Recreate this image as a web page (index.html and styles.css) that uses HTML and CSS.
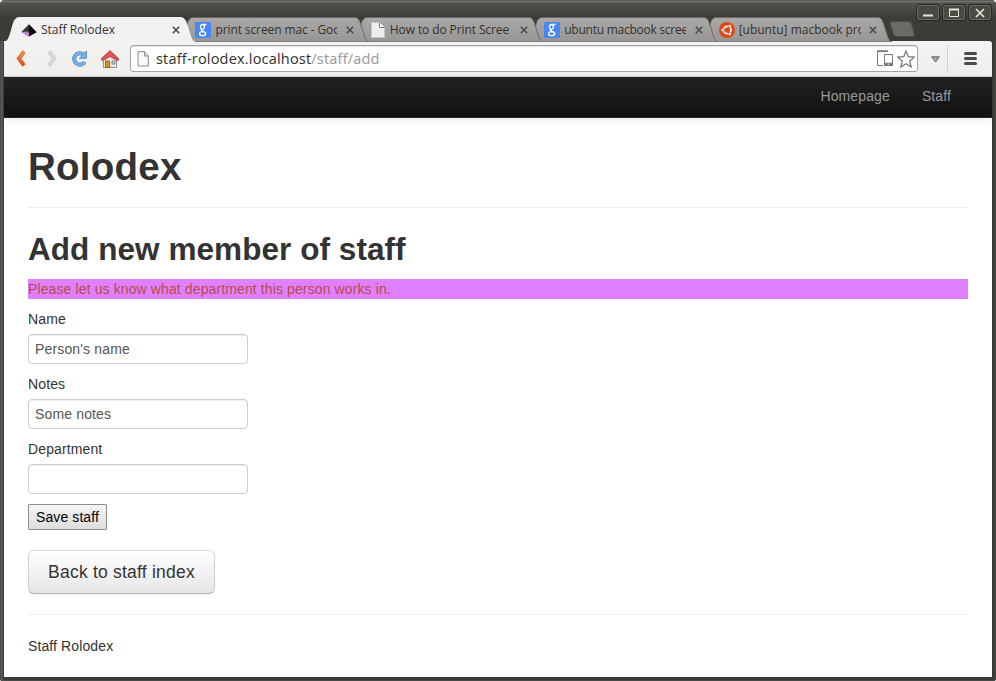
FILE: index.html
```html
<!DOCTYPE html>
<html lang="en">
<head>
<meta charset="utf-8">
<title>Staff Rolodex</title>
<link rel="stylesheet" href="styles.css">
</head>
<body>
<svg class="defs" width="0" height="0">
  <defs>
    <linearGradient id="tabfill" x1="0" y1="0" x2="0" y2="1"><stop offset="0" stop-color="#aaa9a7"/><stop offset="1" stop-color="#979694"/></linearGradient>
    <linearGradient id="orange" x1="0" y1="0" x2="0" y2="1"><stop offset="0" stop-color="#f59a55"/><stop offset="1" stop-color="#d94b0c"/></linearGradient>
    <linearGradient id="prism" x1="0" y1="0" x2="1" y2="0"><stop offset="0" stop-color="#4ed0d8"/><stop offset=".5" stop-color="#c983ee"/><stop offset="1" stop-color="#f36ad4"/></linearGradient>
    <symbol id="tab" viewBox="0 0 190 25"><path d="M0 25C3 24 4 21 5.500 16.500L8.500 6C10 1.800 11.500.5 14.500.5H175C178.500.5 180 2 181.500 6.500L185.500 19C187 23 188 24.500 190 25Z"/></symbol>
    <symbol id="close" viewBox="0 0 8 8"><path d="M.8.8L7.200 7.200M7.200.8L.8 7.200" fill="none" stroke="#4c4b48" stroke-width="1.600"/></symbol>
    <symbol id="google" viewBox="0 0 16 16"><rect width="16" height="16" rx="1" fill="#4787f3"/><g fill="none" stroke="#fff" stroke-width="1.300"><ellipse cx="7.400" cy="4.900" rx="2" ry="2.400"/><ellipse cx="7.600" cy="11.700" rx="3" ry="2"/><path d="M7.500 2.500h4M7.500 7.400c-2 .8-.8 1.400.8 2.100 1.500.6 2.200 1.200 2.300 2"/></g></symbol>
    <symbol id="page" viewBox="0 0 14 16"><path d="M.5.5h8l5 5v10h-13z" fill="#eee" stroke="#c8c8c6"/><path d="M8.500.5v5h5" fill="#fff" stroke="#777"/></symbol>
    <symbol id="ubuntu" viewBox="0 0 16 16"><circle cx="8" cy="8" r="8" fill="#dd4814"/><circle cx="8.300" cy="8" r="3.700" fill="none" stroke="#fff" stroke-width="1.700"/><path d="M5.800 8H3M9.500 5.900l1.500-2.500M9.500 10.100l1.500 2.500" stroke="#dd4814" stroke-width="1"/><g fill="#fff" stroke="#dd4814" stroke-width=".6"><circle cx="3.500" cy="8" r="1.600"/><circle cx="10.700" cy="4" r="1.600"/><circle cx="10.700" cy="12" r="1.600"/></g></symbol>
  </defs>
</svg>
<div class="window">
  <header class="titlebar">
    <nav class="tabs">
      <div class="tab active">
        <svg class="shape"><use href="#tab"/></svg>
        <svg class="fav" viewBox="0 0 16 16"><path d="M8 2.200L.3 10 8 14.500z" fill="#343434"/><path d="M8 2.200l7.700 8L8 14.500z" fill="#090909"/><path d="M.3 10L6.500 9.500 8 11v3.500z" fill="url(#prism)"/></svg>
        <span class="name n0">Staff Rolodex</span><svg class="x"><use href="#close"/></svg>
      </div>
      <div class="tab"><svg class="shape"><use href="#tab"/></svg><svg class="fav"><use href="#google"/></svg><span class="name n1">print screen mac - Goo</span><svg class="x"><use href="#close"/></svg></div>
      <div class="tab"><svg class="shape"><use href="#tab"/></svg><svg class="fav"><use href="#page"/></svg><span class="name n2">How to do Print Scree</span><svg class="x"><use href="#close"/></svg></div>
      <div class="tab"><svg class="shape"><use href="#tab"/></svg><svg class="fav"><use href="#google"/></svg><span class="name n3">ubuntu macbook scree</span><svg class="x"><use href="#close"/></svg></div>
      <div class="tab"><svg class="shape"><use href="#tab"/></svg><svg class="fav"><use href="#ubuntu"/></svg><span class="name n4">[ubuntu] macbook pro</span><svg class="x"><use href="#close"/></svg></div>
      <svg class="newtab" viewBox="0 0 26 16"><path d="M3 .5h16c2 0 3 .8 3.700 3l2.500 9c.6 2.200 0 3-1.700 3H8c-2 0-3-.8-3.700-3L1.300 3C.8 1.200 1.200.5 3 .5z" fill="#6b6a65" stroke="#4c4b46"/></svg>
    </nav>
    <div class="controls">
      <span class="ctl"><svg width="12" height="10"><path d="M1 7.500h10" stroke="#e8e5db" stroke-width="2"/></svg></span>
      <span class="ctl"><svg width="12" height="10"><path d="M1.500 1.500h9v7h-9z" fill="none" stroke="#e8e5db"/><path d="M1 1.500h10" stroke="#e8e5db" stroke-width="2"/></svg></span>
      <span class="ctl"><svg width="12" height="10"><path d="M2 1l8 8M10 1L2 9" stroke="#e8e5db" stroke-width="1.700"/></svg></span>
    </div>
  </header>
  <div class="toolbar">
    <svg class="back" width="10" height="17" viewBox="0 0 10 17"><path d="M6.500.7L9.300 2.800 5 8.500l4.300 5.800-2.800 2L.8 8.500z" fill="url(#orange)" stroke="#d5602d" stroke-width=".7"/></svg>
    <svg class="forward" width="10" height="17" viewBox="0 0 10 17"><path d="M3.500.7L.7 2.800 5 8.500.7 14.300l2.800 2 5.700-7.800z" fill="#d9d8d6" stroke="#c6c5c3" stroke-width=".7"/></svg>
    <svg class="reload" width="17" height="17" viewBox="0 0 17 17"><path d="M12.400 4.500A5.700 5.700 0 1 0 13.700 12" fill="none" stroke="#4c88c7" stroke-width="4"/><path d="M12.400 4.500A5.700 5.700 0 1 0 13.700 12" fill="none" stroke="#79afe2" stroke-width="2.600"/><path d="M15.500.8v7.500H8.300z" fill="#79afe2" stroke="#4c88c7" stroke-width=".8"/></svg>
    <svg class="home" width="18" height="18" viewBox="0 0 18 18"><path d="M2.500 8L9 3l6.500 5v9.500h-13z" fill="#e9e9e2" stroke="#96968d"/><path d="M4.500 11h4v6.500h-4z" fill="#d29222" stroke="#9d661b"/><path d="M11 11h3v3h-3z" fill="#c4d2d4" stroke="#789"/><path d="M9 .6L17.500 8.500v1.700h-2.200L9 6.500 2.700 10.200H.5V8.500z" fill="#dc5257" stroke="#b53b42" stroke-width=".8"/></svg>
    <div class="address">
      <svg class="doc" width="12" height="16" viewBox="0 0 12 16"><path d="M1 .7h6.500L11.300 5v10H1z" fill="#f8f8f8" stroke="#8b8b8b"/><path d="M7.500.7V5h3.800" fill="none" stroke="#8b8b8b"/></svg>
      <span class="url">staff-rolodex.localhost<span>/staff/add</span></span>
      <svg class="device" width="17" height="17" viewBox="0 0 17 17"><path d="M11 1H.5v14.500H6" fill="none" stroke="#777"/><path d="M0 1.200h11" stroke="#777" stroke-width="1.500"/><path d="M7.500 4.500h8v11h-8z" fill="#fff" stroke="#777"/><path d="M7.500 14.200h8" stroke="#777" stroke-width="3"/><path d="M10.700 14.200h1.500" stroke="#fff"/></svg>
      <svg class="star" width="18" height="18" viewBox="0 0 18 18"><path d="M9 1l2.300 5.700 6 .4-4.600 3.900 1.500 6L9 13.700 3.800 17l1.500-6L.7 7.100l6-.4z" fill="#fff" stroke="#767676" stroke-width="1.200"/></svg>
    </div>
    <svg class="drop" width="9" height="7"><path d="M.7.800h7.600L4.500 6z" fill="#aaa" stroke="#66655f"/></svg>
    <svg class="menu" width="13" height="13"><path d="M1.500 1.500h10M1.500 6.500h10M1.500 11.500h10" stroke="#464c4a" stroke-width="3" stroke-linecap="round"/></svg>
  </div>
  <div class="page">
    <nav class="navbar"><a>Homepage</a><a>Staff</a></nav>
    <main class="container">
      <h1>Rolodex</h1>
      <hr>
      <h2>Add new member of staff</h2>
      <p class="error">Please let us know what department this person works in.</p>
      <form>
        <label for="name">Name</label><input id="name" value="Person's name">
        <label for="notes">Notes</label><input id="notes" value="Some notes">
        <label for="dept">Department</label><input id="dept">
        <button type="button" class="save">Save staff</button>
      </form>
      <a class="btn">Back to staff index</a>
      <hr>
      <footer>Staff Rolodex</footer>
    </main>
  </div>
</div>
</body>
</html>
```

FILE: styles.css
```css
* { box-sizing: border-box; }
html, body { margin: 0; height: 100%; overflow: hidden; background: #fff; }
svg { display: block; flex: none; }
.defs { position: absolute; }
.window {
  height: 681px; width: 996px; padding: 0 4px 4px; display: flex; flex-direction: column;
  background: #3c3b37; border-radius: 5px 5px 3px 3px; overflow: hidden;
  box-shadow: inset 1px 0 #4d4c48, inset 3px 0 #56554f, inset -1px -1px #494b47, inset -4px -4px #3a3b38;
}
.titlebar {
  height: 41px; flex: none; display: flex; justify-content: space-between; margin: 0 -4px; padding-left: 4.5px;
  background: linear-gradient(#5c5b56 0, #5c5b56 1px, #858580 1px, #66655f 2px, #53524c 3px, #3d3c38 17px, #3c3b37);
}
.tabs { display: flex; padding-top: 17px; height: 42px; font: 12px "Open Sans", "Noto Sans", sans-serif; }
.tab { position: relative; flex: none; width: 190px; height: 25px; margin-right: -15.6px; display: flex; align-items: center; padding-left: 16.5px; color: #33312c; z-index: 1; }
.tab:nth-child(1) { z-index: 5; }
.tab:nth-child(2) { z-index: 4; }
.tab:nth-child(3) { z-index: 3; }
.tab:nth-child(4) { z-index: 2; }
.shape { position: absolute; left: 0; top: 0; width: 190px; height: 25px; z-index: -1; fill: url(#tabfill); stroke: #6b6a66; stroke-width: 1; }
.active .shape { fill: #f2f1f0; stroke: #f2f1f0; }
.fav { width: 16px; height: 16px; }
.name { width: 122px; margin-left: 4px; overflow: hidden; white-space: nowrap; line-height: 18px; flex: none; }
.n1 { letter-spacing: -.1px; }
.n2 { letter-spacing: -.1px; }
.n3 { letter-spacing: -.25px; }
.x { width: 8px; height: 8px; margin-left: 8.5px; margin-top: 1px; }
.newtab { width: 26px; height: 16px; margin: 4px 0 0 12.5px; }
.controls { display: flex; gap: 2px; padding: 4px 4px 0 0; }
.ctl { width: 24px; height: 17px; display: flex; align-items: center; justify-content: center; border: 1px solid #262522; border-radius: 3px; box-shadow: inset 0 0 0 1px #6b6a63; background: #4a4944; }
.toolbar { height: 36px; flex: none; display: flex; align-items: center; background: linear-gradient(#f4f3f2, #efeeed); border-bottom: 1px solid #c9c8c7; border-radius: 0 3px 0 0; padding-left: 12px; position: relative; }
.forward { margin-left: 21px; }
.reload { margin-left: 14px; }
.home { margin-left: 13px; }
.address { display: flex; align-items: center; width: 788px; height: 27px; margin-left: 11px; padding-left: 6px; border: 1px solid #a5a4a2; border-radius: 3px; background: #fff; box-shadow: inset 0 1px #e5e5e5; }
.url { width: 721px; margin-left: 7px; white-space: nowrap; font: 14.5px/20px "Open Sans", "Noto Sans", sans-serif; letter-spacing: .2px; color: #302f2d; }
.url span { color: #999; }
.star { margin-left: 2.5px; }
.drop { margin-left: 13px; }
.menu { margin-left: 24px; }
.drop { margin-top: 1px; }
.toolbar::after { content: ""; order: 1; width: 1px; height: 28px; margin-left: -30px; background: #d2d1cf; }
.page { flex: 1; min-height: 0; background: #fff; font: 14px/20px "Liberation Sans", Arial, sans-serif; letter-spacing: .115px; color: #333; overflow: hidden; }
.navbar { height: 41px; display: flex; justify-content: flex-end; padding: 9px 41px 0 0; gap: 32px; background: linear-gradient(#222, #111); border-bottom: 1px solid #252525; box-shadow: 0 1px 10px rgba(0,0,0,.1); color: #999; }
.container { padding: 29px 24px 0; }
h1, h2 { margin: 0; line-height: 40px; font-weight: bold; }
h1 { font-size: 38.5px; letter-spacing: .25px; }
h2 { font-size: 31.5px; letter-spacing: .06px; }
hr { margin: 20px 0; border: 0; border-top: 1px solid #eee; border-bottom: 1px solid #fff; }
.error { margin: 10px 0; background: #df80ff; color: #b94a48; }
form { margin: 0 0 20px; }
label { display: block; margin-bottom: 5px; }
input { display: block; width: 220px; height: 30px; margin: 0 0 10px; padding: 4px 6px; font: 14px/20px "Liberation Sans", Arial, sans-serif; letter-spacing: .15px; color: #555; border: 1px solid #ccc; border-radius: 4px; box-shadow: inset 0 1px 1px rgba(0,0,0,.075); }
.save { display: block; width: 79px; height: 26px; padding: 0; border: 1px solid #8f8f8f; border-radius: 1px; background: linear-gradient(#f5f5f5, #ddd); color: #000; font: 14px/20px "Liberation Sans", Arial, sans-serif; letter-spacing: .1px; }
.btn { display: block; width: 187px; height: 44px; padding: 11px 0; text-align: center; font-size: 17.5px; line-height: 20px; letter-spacing: .22px; border: 1px solid #ccc; border-color: #dedede #d0d0d0 #b3b3b3; border-radius: 6px; background: linear-gradient(#fff, #e6e6e6); box-shadow: inset 0 1px rgba(255,255,255,.2), 0 1px 2px rgba(0,0,0,.05); text-shadow: 0 1px 1px rgba(255,255,255,.75); }
```
